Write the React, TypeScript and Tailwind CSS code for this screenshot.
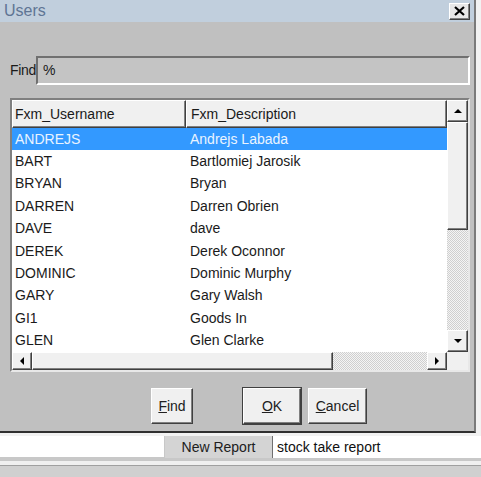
import React from 'react'

const users: [string, string][] = [
  ['ANDREJS', 'Andrejs Labada'],
  ['BART', 'Bartlomiej Jarosik'],
  ['BRYAN', 'Bryan'],
  ['DARREN', 'Darren Obrien'],
  ['DAVE', 'dave'],
  ['DEREK', 'Derek Oconnor'],
  ['DOMINIC', 'Dominic Murphy'],
  ['GARY', 'Gary Walsh'],
  ['GI1', 'Goods In'],
  ['GLEN', 'Glen Clarke'],
]

const raised = 'border border-t-white border-l-white border-r-[#404040] border-b-[#404040] shadow-[inset_-1px_-1px_0_#808080]'
const dither = 'bg-[repeating-conic-gradient(#cfcfcf_0_25%,#f4f4f4_0_50%)] bg-size-[2px_2px]'

function Arrow({ dir }: { dir: 'up' | 'down' | 'left' | 'right' }) {
  const pts = {
    up: '0,4 4,0 8,4',
    down: '0,0 8,0 4,4',
    left: '4,0 4,8 0,4',
    right: '0,0 0,8 4,4',
  }[dir]
  const vert = dir === 'up' || dir === 'down'
  return (
    <svg width={vert ? 8 : 4} height={vert ? 4 : 8} viewBox={vert ? '0 0 8 4' : '0 0 4 8'}>
      <polygon points={pts} fill="#000" />
    </svg>
  )
}

function Btn({ label, under, def }: { label: string; under: string; def?: boolean }) {
  const rest = label.slice(under.length)
  return (
    <button
      className={`w-full h-[36px] flex items-center justify-center bg-[#f0f0f0] text-[14px] text-[#202020] ${def ? 'outline outline-1 outline-[#404040]' : ''} ${raised}`}
    >
      <span>
        <span className="underline">{under}</span>
        {rest}
      </span>
    </button>
  )
}

export default function App() {
  return (
    <div className="w-[481px] h-[477px] bg-[#f2f2f2] overflow-hidden font-['Liberation_Sans',Arial,sans-serif] text-[14px] text-[#1a1a1a]">
      <div className="w-[476px] h-[433px] bg-[#c0c0c0] border-r-2 border-b-2 border-r-[#7a7a7a] border-b-[#303030]">
        <div className="h-[22px] bg-[#c1cfdd] flex items-center justify-between pl-[4px] pr-[4px]">
          <span className="text-[16px] text-[#5f7594] leading-none">Users</span>
          <div className={`w-[21px] h-[17px] bg-[#e8e8e8] flex items-center justify-center ${raised}`}>
            <svg width="11" height="10" viewBox="0 0 11 10">
              <path d="M1 1 L10 9 M10 1 L1 9" stroke="#000" strokeWidth="2.2" />
            </svg>
          </div>
        </div>

        <div className="pl-[10px] pr-[4px]">
          <div className="flex items-center mt-[34px] h-[29px]">
            <span className="w-[26px] tracking-[-0.3px]">Find</span>
            <div className="w-[434px] h-[29px] border-2 border-t-[#707070] border-l-[#707070] border-r-white border-b-white bg-[#c4c4c4] flex items-center px-[5px]">
              %
            </div>
          </div>

          <div className="mt-[13px] w-[460px] h-[274px] border-2 border-t-[#808080] border-l-[#808080] border-r-[#e8e8e8] border-b-[#e8e8e8] bg-white flex flex-col">
            <div className="flex flex-1 min-h-0">
              <div className="flex-1 flex flex-col">
                <div className="h-[28px] shrink-0 flex bg-[#f0f0f0]">
                  <div className={`w-[174px] flex items-center pl-[2px] ${raised}`}>Fxm_Username</div>
                  <div className={`flex-1 flex items-center pl-[4px] ${raised}`}>Fxm_Description</div>
                </div>
                {users.map(([u, d], i) => (
                  <div
                    key={u}
                    className={`h-[22.4px] shrink-0 flex items-center ${i === 0 ? 'bg-[#3399ff] text-[#eaf4ff]' : ''}`}
                  >
                    <span className="w-[174px] pl-[3px]">{u}</span>
                    <span className="pl-[4px]">{d}</span>
                  </div>
                ))}
              </div>
              <div className="w-[21px] flex flex-col">
                <div className={`h-[22px] bg-[#f0f0f0] flex items-center justify-center ${raised}`}>
                  <Arrow dir="up" />
                </div>
                <div className={`h-[108px] bg-[#f0f0f0] ${raised}`} />
                <div className={`flex-1 ${dither}`} />
                <div className={`h-[22px] bg-[#f0f0f0] flex items-center justify-center ${raised}`}>
                  <Arrow dir="down" />
                </div>
              </div>
            </div>
            <div className="h-[18px] shrink-0 flex">
              <div className={`w-[20px] bg-[#f0f0f0] flex items-center justify-center ${raised}`}>
                <Arrow dir="left" />
              </div>
              <div className={`w-[301px] bg-[#f0f0f0] ${raised}`} />
              <div className={`flex-1 ${dither}`} />
              <div className={`w-[20px] bg-[#f0f0f0] flex items-center justify-center ${raised}`}>
                <Arrow dir="right" />
              </div>
              <div className="w-[21px] bg-[#f0f0f0]" />
            </div>
          </div>

          <div className="flex mt-[16px]">
            <div className="ml-[141px] w-[42px]">
              <Btn label="Find" under="F" />
            </div>
            <div className="ml-[50px] w-[58px]">
              <Btn label="OK" under="O" def />
            </div>
            <div className="ml-[7px] w-[59px]">
              <Btn label="Cancel" under="C" />
            </div>
          </div>
        </div>
      </div>

      <div className="mt-[3px] h-[22px] flex bg-[#d4d4d4]">
        <div className="w-[165px] bg-white border-r border-b border-[#c8c8c8]" />
        <div className="w-[107px] flex items-center justify-center text-[14px] text-[#202020]">New Report</div>
        <div className="flex-1 bg-white border-l border-l-[#707070] flex items-center pl-[4px] text-[14px] text-[#101010]">
          stock take report
        </div>
      </div>
      <div className="h-[3px] bg-[#c8c8c8]" />
      <div className="h-[4px] bg-[#f0f0f0]" />
      <div className="h-[12px] bg-[#d0d0d0] border-t border-[#a0a0a0]" />
    </div>
  )
}
